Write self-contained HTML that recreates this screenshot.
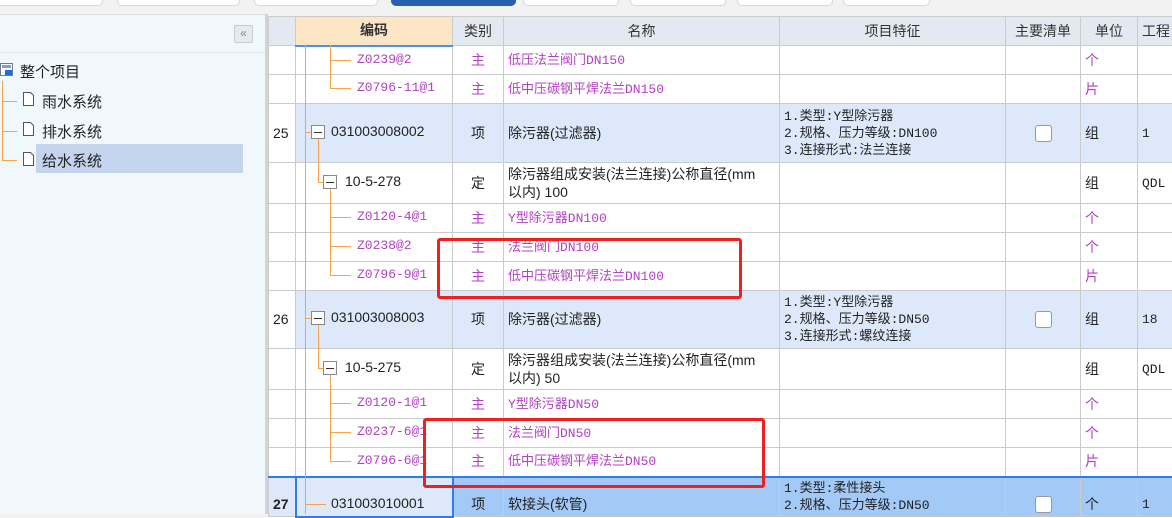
<!DOCTYPE html>
<html><head><meta charset="utf-8"><style>
*{margin:0;padding:0;box-sizing:border-box}
body{width:1172px;height:514px;overflow:hidden;background:#f2f2f2;font-family:"Liberation Sans","Noto Sans CJK SC",sans-serif;font-size:14px;color:#222;position:relative}
.tab{position:absolute;top:-6px;height:12px;background:#fff;border:1px solid #d8d8d8;border-radius:0 0 5px 5px}
#left{position:absolute;left:0;top:14px;width:265px;height:500px;background:#f1f8fc;border-top:1px solid #ddd}
#split{position:absolute;left:265px;top:14px;width:3px;height:500px;background:#d0d4d8}
table{position:absolute;left:268px;top:16px;border-collapse:collapse;table-layout:fixed;width:920px;background:#fff}
td{border:1px solid #cbcbcb;padding:0 4px;font-size:14px;line-height:17px;overflow:hidden;white-space:nowrap;vertical-align:middle}
tr.h td{background:#e3e9f1;text-align:center;color:#333}
.c{text-align:center}
.p{color:#b23fc4}
.m{font-family:"Liberation Mono","Noto Sans CJK SC",monospace;font-size:13px}
tr.b td{background:#dde9fb}
tr.s td{background:#a3c9f6}
.ln{position:absolute;background:#f7a34a}
.bx{position:absolute;width:14px;height:14px;border:1px solid #888;background:#fff}
.bx:after{content:"";position:absolute;left:2px;right:2px;top:6px;height:1px;background:#333}
.red{position:absolute;border:3px solid #f02020;border-radius:3px}
.cb{display:inline-block;width:17px;height:17px;border:1px solid #999;border-radius:3px;background:#fff;vertical-align:middle}
.t{position:absolute;white-space:nowrap}
</style></head><body>
<div class="tab" style="left:-5px;width:108px"></div>
<div class="tab" style="left:117px;width:123px"></div>
<div class="tab" style="left:254px;width:124px"></div>
<div class="tab" style="left:391px;width:125px;background:#2a5fb0;border-color:#2a5fb0"></div>
<div class="tab" style="left:523px;width:96px"></div>
<div class="tab" style="left:630px;width:96px"></div>
<div class="tab" style="left:737px;width:96px"></div>
<div class="tab" style="left:843px;width:87px"></div>

<div id="left">
 <div style="position:absolute;left:234px;top:10px;width:19px;height:18px;border:1px solid #c4ccd4;background:#e4eaf0;border-radius:2px;color:#888;font-size:12px;line-height:15px;text-align:center">«</div>
 <div style="position:absolute;left:0;top:37px;width:265px;height:1px;background:#dde4ea"></div>
 <svg style="position:absolute;left:0;top:48px" width="14" height="14"><rect x="0.5" y="0.5" width="12" height="12" fill="#fff" stroke="#6a7c90"/><rect x="2" y="2" width="9" height="3" fill="#7da2d8"/><rect x="5" y="7" width="7" height="5" fill="#1f6fd0"/></svg>
 <div class="t" style="left:20px;top:46px;font-size:15px">整个项目</div>
 <div class="ln" style="left:2px;top:66px;width:1px;height:79px"></div>
 <div class="ln" style="left:2px;top:86px;width:15px;height:1px"></div>
 <div class="ln" style="left:2px;top:116px;width:15px;height:1px"></div>
 <div class="ln" style="left:2px;top:145px;width:15px;height:1px"></div>
 <div style="position:absolute;left:36px;top:129px;width:207px;height:29px;background:#c5d4ed"></div>
 <svg style="position:absolute;left:22px;top:77px" width="13" height="80"><g fill="#fff" stroke="#555"><path d="M1.5 .5h7l3 3v10h-10z"/><path d="M1.5 30.5h7l3 3v10h-10z"/><path d="M1.5 60.5h7l3 3v10h-10z"/></g></svg>
 <div class="t" style="left:42px;top:76px;font-size:15px">雨水系统</div>
 <div class="t" style="left:42px;top:106px;font-size:15px">排水系统</div>
 <div class="t" style="left:42px;top:135px;font-size:15px">给水系统</div>
</div>
<div id="split"></div>

<table>
<colgroup><col style="width:27px"><col style="width:157px"><col style="width:51px"><col style="width:276px"><col style="width:226px"><col style="width:75px"><col style="width:57px"><col style="width:51px"></colgroup>
<tr class="h" style="height:29px"><td></td><td style="background:#fde6c6;border-bottom:2px solid #4a90e8;font-weight:bold">编码</td><td>类别</td><td>名称</td><td>项目特征</td><td style="padding:0">主要清单</td><td>单位</td><td style="text-align:left">工程</td></tr>
<tr style="height:29px"><td></td><td></td><td class="c p">主</td><td class="p m">低压法兰阀门DN150</td><td></td><td></td><td class="p">个</td><td></td></tr>
<tr style="height:29px"><td></td><td></td><td class="c p">主</td><td class="p m">低中压碳钢平焊法兰DN150</td><td></td><td></td><td class="p">片</td><td></td></tr>
<tr class="b" style="height:59px"><td style="background:#fff">25</td><td></td><td class="c">项</td><td>除污器(过滤器)</td><td class="m" style="line-height:17px;font-size:13px">1.类型:Y型除污器<br>2.规格、压力等级:DN100<br>3.连接形式:法兰连接</td><td class="c"><span class="cb"></span></td><td>组</td><td class="m">1</td></tr>
<tr style="height:41px"><td></td><td></td><td class="c">定</td><td style="line-height:18px">除污器组成安装(法兰连接)公称直径(mm<br>以内) 100</td><td></td><td></td><td>组</td><td class="m">QDL</td></tr>
<tr style="height:29px"><td></td><td></td><td class="c p">主</td><td class="p m">Y型除污器DN100</td><td></td><td></td><td class="p">个</td><td></td></tr>
<tr style="height:29px"><td></td><td></td><td class="c p">主</td><td class="p m">法兰阀门DN100</td><td></td><td></td><td class="p">个</td><td></td></tr>
<tr style="height:29px"><td></td><td></td><td class="c p">主</td><td class="p m">低中压碳钢平焊法兰DN100</td><td></td><td></td><td class="p">片</td><td></td></tr>
<tr class="b" style="height:58px"><td style="background:#fff">26</td><td></td><td class="c">项</td><td>除污器(过滤器)</td><td class="m" style="font-size:13px">1.类型:Y型除污器<br>2.规格、压力等级:DN50<br>3.连接形式:螺纹连接</td><td class="c"><span class="cb"></span></td><td>组</td><td class="m">18</td></tr>
<tr style="height:41px"><td></td><td></td><td class="c">定</td><td style="line-height:18px">除污器组成安装(法兰连接)公称直径(mm<br>以内) 50</td><td></td><td></td><td>组</td><td class="m">QDL</td></tr>
<tr style="height:29px"><td></td><td></td><td class="c p">主</td><td class="p m">Y型除污器DN50</td><td></td><td></td><td class="p">个</td><td></td></tr>
<tr style="height:29px"><td></td><td></td><td class="c p">主</td><td class="p m">法兰阀门DN50</td><td></td><td></td><td class="p">个</td><td></td></tr>
<tr style="height:29px"><td></td><td></td><td class="c p">主</td><td class="p m">低中压碳钢平焊法兰DN50</td><td></td><td></td><td class="p">片</td><td></td></tr>
<tr class="s" style="height:40px"><td style="background:#dde9fb;font-weight:bold;border-top:2px solid #2f7de8;vertical-align:top;padding-top:18px">27</td><td style="background:#dde9fb;border:2px solid #2f7de8"></td><td class="c" style="border-top:2px solid #2f7de8;vertical-align:top;padding-top:18px">项</td><td style="border-top:2px solid #2f7de8;vertical-align:top;padding-top:18px">软接头(软管)</td><td class="m" style="font-size:13px;border-top:2px solid #2f7de8;vertical-align:top;padding-top:2px">1.类型:柔性接头<br>2.规格、压力等级:DN50</td><td class="c" style="border-top:2px solid #2f7de8;vertical-align:top;padding-top:18px"><span class="cb"></span></td><td style="border-top:2px solid #2f7de8;vertical-align:top;padding-top:18px">个</td><td class="m" style="border-top:2px solid #2f7de8;vertical-align:top;padding-top:18px">1</td></tr>
</table>

<!-- tree lines -->
<div class="ln" style="left:305px;top:45px;width:1px;height:469px"></div>
<div class="ln" style="left:330px;top:45px;width:1px;height:43px"></div>
<div class="ln" style="left:330px;top:60px;width:21px;height:1px"></div>
<div class="ln" style="left:330px;top:88px;width:21px;height:1px"></div>
<div class="t p m" style="left:357px;top:52px">Z0239@2</div>
<div class="t p m" style="left:357px;top:80px">Z0796-11@1</div>

<div class="ln" style="left:305px;top:132px;width:6px;height:1px"></div>
<div class="bx" style="left:311px;top:125px"></div>
<div class="t" style="left:331px;top:123px">031003008002</div>
<div class="ln" style="left:318px;top:139px;width:1px;height:44px"></div>
<div class="ln" style="left:318px;top:182px;width:5px;height:1px"></div>
<div class="bx" style="left:323px;top:175px"></div>
<div class="t" style="left:345px;top:173px">10-5-278</div>
<div class="ln" style="left:330px;top:189px;width:1px;height:86px"></div>
<div class="ln" style="left:330px;top:217px;width:21px;height:1px"></div>
<div class="ln" style="left:330px;top:246px;width:21px;height:1px"></div>
<div class="ln" style="left:330px;top:275px;width:21px;height:1px"></div>
<div class="t p m" style="left:357px;top:209px">Z0120-4@1</div>
<div class="t p m" style="left:357px;top:238px">Z0238@2</div>
<div class="t p m" style="left:357px;top:267px">Z0796-9@1</div>

<div class="ln" style="left:305px;top:318px;width:6px;height:1px"></div>
<div class="bx" style="left:311px;top:311px"></div>
<div class="t" style="left:331px;top:309px">031003008003</div>
<div class="ln" style="left:318px;top:325px;width:1px;height:44px"></div>
<div class="ln" style="left:318px;top:368px;width:5px;height:1px"></div>
<div class="bx" style="left:323px;top:361px"></div>
<div class="t" style="left:345px;top:359px">10-5-275</div>
<div class="ln" style="left:330px;top:375px;width:1px;height:86px"></div>
<div class="ln" style="left:330px;top:403px;width:21px;height:1px"></div>
<div class="ln" style="left:330px;top:432px;width:21px;height:1px"></div>
<div class="ln" style="left:330px;top:461px;width:21px;height:1px"></div>
<div class="t p m" style="left:357px;top:395px">Z0120-1@1</div>
<div class="t p m" style="left:357px;top:424px">Z0237-6@1</div>
<div class="t p m" style="left:357px;top:453px">Z0796-6@1</div>

<div class="ln" style="left:305px;top:504px;width:21px;height:1px"></div>
<div class="t" style="left:331px;top:495px">031003010001</div>

<div class="red" style="left:437px;top:238px;width:305px;height:61px"></div>
<div class="red" style="left:423px;top:418px;width:342px;height:70px"></div>
</body></html>
